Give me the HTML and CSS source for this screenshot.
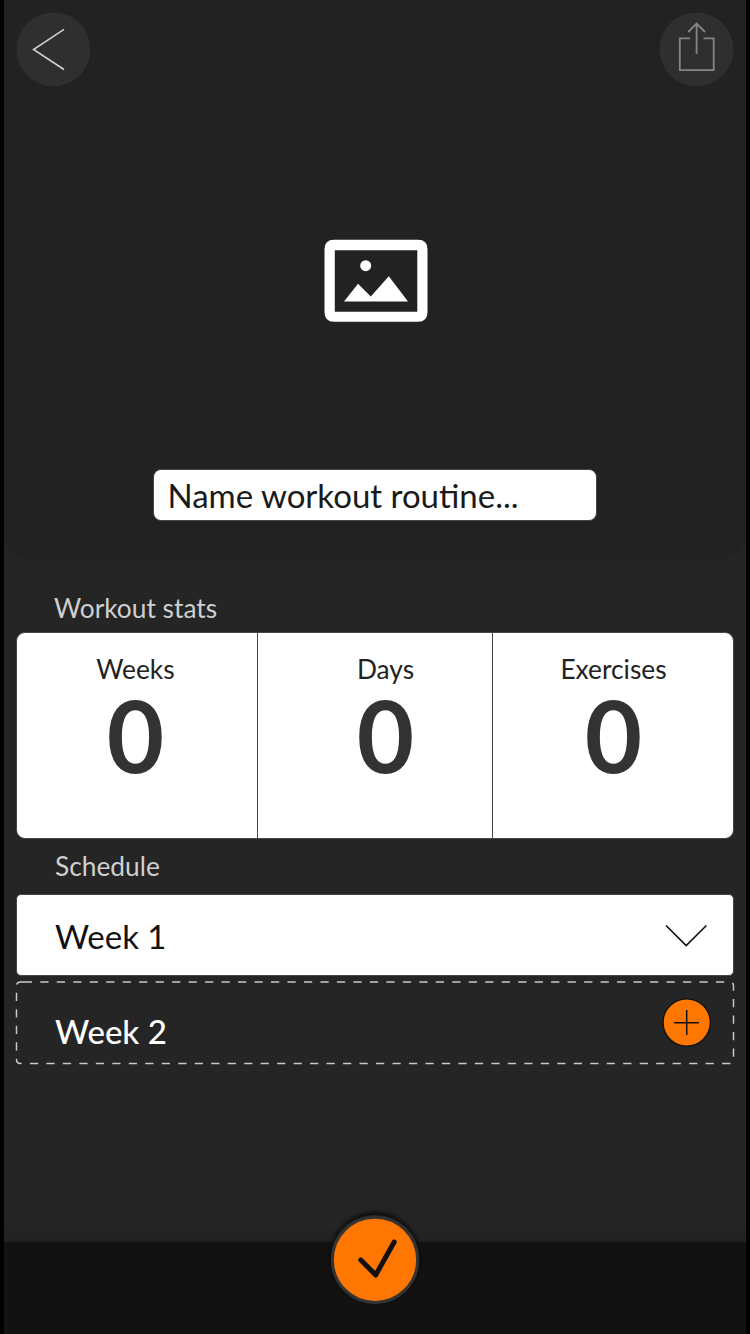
FILE: index.html
```html
<!DOCTYPE html>
<html lang="en">
<head>
<meta charset="utf-8">
<title>Workout routine</title>
<link rel="stylesheet" href="styles.css">
</head>
<body>
<main class="screen">
  <header class="hero">
    <nav class="topbar">
      <button class="round" aria-label="Back">
        <svg width="76" height="76" viewBox="0 0 76 76"><circle cx="37.500" cy="37.400" r="37" fill="#2f2f2f"/><path d="M48 17.300 17.500 37.500 48 57.500" fill="none" stroke="#d2d2d2" stroke-width="1.500"/></svg>
      </button>
      <button class="round" aria-label="Share">
        <svg width="76" height="76" viewBox="0 0 76 76"><circle cx="38.500" cy="37.400" r="37" fill="#2f2f2f"/><path d="M32 26.300H21.800V58.200H55.700V26.300H45.500M38.600 42V11.500M30.200 20 38.600 11.500 47 20" fill="none" stroke="#858585" stroke-width="1.800"/></svg>
      </button>
    </nav>
    <svg class="picture" width="104" height="84" viewBox="0 0 104 84">
      <path fill="#fff" fill-rule="evenodd" d="M10 .8H94Q103.500 .8 103.500 10.300V73.300Q103.500 82.800 94 82.800H10Q.500 82.800 .500 73.300V10.300Q.500 .8 10 .8ZM10.800 11.200V72.700H93.300V11.200Z"/>
      <circle cx="41.700" cy="26.700" r="5.500" fill="#fff"/>
      <path fill="#fff" d="M20 62.500 34 44.700 46.800 57.500 64.800 37.200 84 62.500Z"/>
    </svg>
    <div class="name">Name workout routine...</div>
  </header>

  <section class="content">
    <h2 class="label stats-label">Workout stats</h2>
    <div class="stats">
      <div class="stat weeks"><span class="stat-name">Weeks</span><strong class="stat-value">0</strong></div>
      <div class="stat days"><span class="stat-name">Days</span><strong class="stat-value">0</strong></div>
      <div class="stat exercises"><span class="stat-name">Exercises</span><strong class="stat-value">0</strong></div>
    </div>
    <h2 class="label schedule-label">Schedule</h2>
    <div class="week current">
      <span>Week 1</span>
      <svg width="44" height="26" viewBox="0 0 44 26"><path d="M2 2.500 22.200 22.500 42.400 2.500" fill="none" stroke="#111" stroke-width="1.700"/></svg>
    </div>
    <div class="week next">
      <svg class="outline" width="720" height="84" viewBox="0 0 720 84"><path d="M8.800 1H714.500Q718.500 1 718.500 5V78.500Q718.500 82.500 714.500 82.500H5.500Q1.500 82.500 1.500 78.500V5Q1.500 1 5.500 1H8.800" fill="none" stroke="#c8c8c8" stroke-width="1.500" stroke-dasharray="8.240 8.240"/></svg>
      <span class="next-name">Week 2</span>
      <svg width="50" height="50" viewBox="0 0 50 50"><circle cx="24.700" cy="24.500" r="23.600" fill="#ff7700" stroke="#111" stroke-width="1.300"/><path d="M12.200 24.700H37M24.700 12V37" stroke="#111" stroke-width="1.500"/></svg>
    </div>
  </section>

  <footer class="bottom">
    <button class="done" aria-label="Save">
      <svg width="90" height="90" viewBox="0 0 90 90"><circle cx="45" cy="44.800" r="42.600" fill="#ff7700" stroke="#343434" stroke-width="3"/><path d="M30.800 45 45.700 60 64.200 27" fill="none" stroke="#111" stroke-width="5" stroke-linecap="round" stroke-linejoin="round"/></svg>
    </button>
  </footer>
</main>
</body>
</html>
```
FILE: styles.css
```css
* { box-sizing: border-box; }
body {
  margin: 0;
  background: #000;
  font-family: Lato, "Liberation Sans", sans-serif;
}
button { padding: 0; border: 0; background: none; }
svg { display: block; flex: none; }
.screen {
  display: flex;
  flex-direction: column;
  width: 742px;
  height: 1334px;
  margin: 0 auto;
  background: #252525;
}
.hero {
  display: flex;
  flex-direction: column;
  align-items: center;
  height: 560px;
  border-radius: 0 0 28px 28px;
  background: #222;
}
.topbar {
  display: flex;
  justify-content: space-between;
  width: 100%;
  padding: 12px 12px 0;
}
.round { width: 76px; height: 76px; }
.picture { margin: 151px 0 0 2px; }
.name {
  width: 444px;
  height: 52px;
  margin-top: 146px;
  padding-left: 13.500px;
  border: 1.500px solid #464646;
  border-radius: 8px;
  background: #fff;
  color: #1a1a1a;
  font-size: 33px;
  line-height: 50px;
  white-space: nowrap;
}
.content { flex: 1; padding: 0 12px; }
.label {
  margin: 0;
  padding-left: 38px;
  color: #cfcfcf;
  font-size: 26.300px;
  font-weight: 400;
  line-height: 32px;
}
.stats-label { padding-top: 32px; }
.stats {
  display: grid;
  grid-template-columns: 240px 235px 241px;
  height: 207px;
  margin-top: 8px;
  border: 1px solid #464646;
  border-radius: 9px;
  background: #fff;
  overflow: hidden;
}
.stat {
  display: flex;
  flex-direction: column;
  align-items: center;
  padding-top: 20px;
  color: #222;
}
.stat + .stat { border-left: 1.500px solid #464646; }
.weeks { padding-right: 3px; }
.days { padding-left: 21px; }
.exercises { padding-left: 1px; }
.stat-name { font-size: 26.300px; line-height: 32px; }
.stat-value {
  color: #333;
  font-size: 99px;
  font-weight: 700;
  line-height: 99px;
}
.schedule-label { padding: 11px 0 0 39px; }
.week {
  display: flex;
  align-items: center;
  justify-content: space-between;
  padding-left: 39px;
  font-size: 33px;
}
.current {
  height: 82px;
  margin-top: 12px;
  padding: 1px 25px 0 38px;
  border: 1px solid #464646;
  border-radius: 5px;
  background: #fff;
  color: #111;
}
.next {
  position: relative;
  height: 84px;
  margin-top: 5px;
  padding-right: 22px;
  color: #fff;
}
.next-name {
  padding-top: 15px;
  font-weight: 500;
}
.outline { position: absolute; left: -1px; top: 0; }
.bottom {
  display: flex;
  justify-content: center;
  height: 92px;
  background: #121212;
  box-shadow: 0 -2px 8px #1f1f1f;
  clip-path: inset(-40px 0 0);
}
.done {
  width: 90px;
  height: 90px;
  margin-top: -27px;
  border-radius: 50%;
  box-shadow: 0 -3px 4px #0c0c0c;
}
```
